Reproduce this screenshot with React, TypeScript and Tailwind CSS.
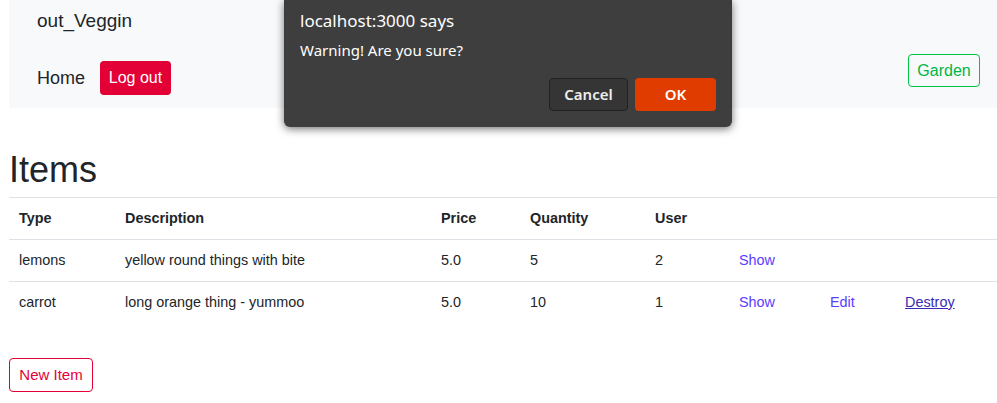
import React from 'react';

interface Item {
  type: string;
  description: string;
  price: string;
  quantity: string;
  user: string;
  canEdit: boolean;
}

const items: Item[] = [
  { type: 'lemons', description: 'yellow round things with bite', price: '5.0', quantity: '5', user: '2', canEdit: false },
  { type: 'carrot', description: 'long orange thing - yummoo', price: '5.0', quantity: '10', user: '1', canEdit: true },
];

const cols = 'grid grid-cols-[106px_316px_89px_125px_84px_91px_75px_1fr]';

function ConfirmDialog() {
  return (
    <div
      className="absolute left-[284px] top-0 w-[448px] rounded-b-[6px] bg-[#3e3e3e] px-4 pb-4 pt-[8px] text-white shadow-[0_2px_8px_rgba(0,0,0,0.55)]"
      style={{ fontFamily: '"Noto Sans", "Open Sans", sans-serif' }}
    >
      <div className="text-[17px] leading-[26px]">localhost:3000 says</div>
      <div className="mt-[5px] text-[15px] leading-[22px]">Warning! Are you sure?</div>
      <div className="mt-[17px] flex justify-end gap-[7px]">
        <button className="h-[33px] w-[79px] rounded-[4px] border border-[#222] bg-[#353535] text-[15px] font-semibold text-[#eeeeee]">
          Cancel
        </button>
        <button className="h-[33px] w-[81px] rounded-[4px] bg-[#e13c00] text-[15px] font-semibold text-white">
          OK
        </button>
      </div>
    </div>
  );
}

export default function App() {
  return (
    <div
      className="relative min-h-[403px] bg-white pl-[9px] text-[#212529]"
      style={{ fontFamily: '"Liberation Sans", Arial, sans-serif' }}
    >
      <nav className="flex h-[108px] items-start justify-between bg-[#f8f9fa] pl-[28px] pr-[17px]">
        <div>
          <div className="pt-[7px] text-[19px] leading-[28px]">out_Veggin</div>
          <div className="mt-[26px] flex items-center gap-[15px]">
            <span className="text-[18px] leading-[28px]">Home</span>
            <button className="h-[34px] w-[71px] rounded-[4px] bg-[#e30036] text-[16px] text-white">
              Log out
            </button>
          </div>
        </div>
        <button className="mt-[54px] h-[33px] w-[72px] rounded-[4px] border border-[#00c245] text-[16px] text-[#00b544]">
          Garden
        </button>
      </nav>

      <h1 className="mt-[40px] text-[36px] leading-[44px]">Items</h1>

      <div className="mt-[5px] text-[14.4px]">
        <div className={`${cols} h-[42px] items-center border-t border-[#dee2e6] font-bold`}>
          <div className="px-[10px]">Type</div>
          <div className="px-[10px]">Description</div>
          <div className="px-[10px]">Price</div>
          <div className="px-[10px]">Quantity</div>
          <div className="px-[10px]">User</div>
          <div />
          <div />
          <div />
        </div>
        {items.map((item) => (
          <div key={item.type} className={`${cols} h-[42px] items-center border-t border-[#dee2e6]`}>
            <div className="px-[10px]">{item.type}</div>
            <div className="px-[10px]">{item.description}</div>
            <div className="px-[10px]">{item.price}</div>
            <div className="px-[10px]">{item.quantity}</div>
            <div className="px-[10px]">{item.user}</div>
            <div className="px-[10px]">
              <a className="text-[#5a3dff]">Show</a>
            </div>
            <div className="px-[10px]">{item.canEdit && <a className="text-[#5a3dff]">Edit</a>}</div>
            <div className="px-[10px]">
              {item.canEdit && <a className="text-[#3a2bb5] underline">Destroy</a>}
            </div>
          </div>
        ))}
      </div>

      <button className="mt-[35px] h-[34px] w-[84px] rounded-[4px] border border-[#e30036] text-[15px] text-[#e30036]">
        New Item
      </button>

      <ConfirmDialog />
    </div>
  );
}
